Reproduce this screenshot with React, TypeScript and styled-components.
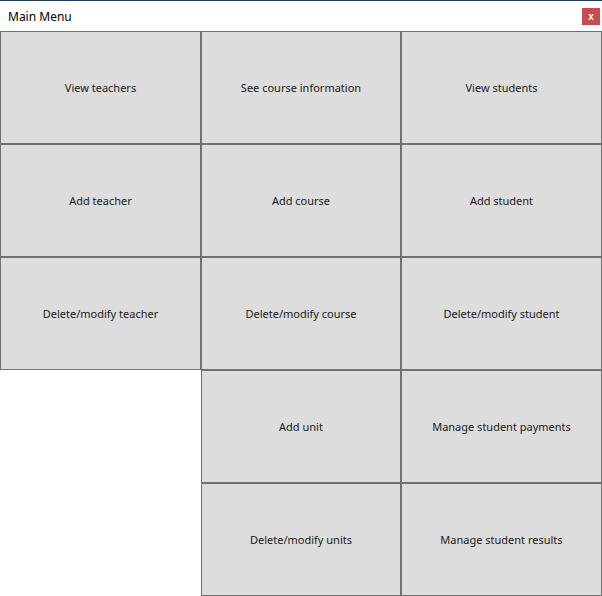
import React from "react";
import styled, { createGlobalStyle } from "styled-components";

const Global = createGlobalStyle`
  html, body { margin: 0; padding: 0; background: #ffffff; }
  body { font-family: "Noto Sans", "Open Sans", "Liberation Sans", sans-serif; }
  * { box-sizing: border-box; }
`;

const Window = styled.div`
  width: 602px;
  height: 596px;
  background: #ffffff;
  display: flex;
  flex-direction: column;
  border-top: 1px solid #1d3c5c;
`;

const TitleBar = styled.div`
  height: 30px;
  display: flex;
  align-items: center;
  justify-content: space-between;
  padding: 0 2px 0 8px;
`;

const Title = styled.span`
  font-size: 12px;
  color: #000000;
  line-height: 1;
  margin-top: 1px;
`;

const CloseButton = styled.button`
  width: 18px;
  height: 17px;
  margin-top: 1px;
  border: none;
  padding: 0;
  background: #c74b50;
  color: #ffffff;
  font-family: "Liberation Sans", sans-serif;
  font-weight: bold;
  font-size: 10px;
  line-height: 17px;
  text-align: center;
`;

const Grid = styled.div`
  display: grid;
  grid-template-columns: 201px 200px 201px;
  grid-auto-rows: 113px;
`;

const MenuButton = styled.button<{ $col?: number }>`
  grid-column: ${(p) => (p.$col ? `${p.$col}` : "auto")};
  background: #dddddd;
  border: 1px solid #707070;
  margin: 0;
  padding: 0;
  font-family: "Noto Sans", "Open Sans", "Liberation Sans", sans-serif;
  font-size: 11px;
  color: #1a1a1a;
  display: flex;
  align-items: center;
  justify-content: center;
`;

type Item = { label: string; col?: number };

const items: Item[] = [
  { label: "View teachers" },
  { label: "See course information" },
  { label: "View students" },
  { label: "Add teacher" },
  { label: "Add course" },
  { label: "Add student" },
  { label: "Delete/modify teacher" },
  { label: "Delete/modify course" },
  { label: "Delete/modify student" },
  { label: "Add unit", col: 2 },
  { label: "Manage student payments" },
  { label: "Delete/modify units", col: 2 },
  { label: "Manage student results" },
];

export default function App() {
  return (
    <>
      <Global />
      <Window>
        <TitleBar>
          <Title>Main Menu</Title>
          <CloseButton>x</CloseButton>
        </TitleBar>
        <Grid>
          {items.map((it) => (
            <MenuButton key={it.label} $col={it.col}>
              {it.label}
            </MenuButton>
          ))}
        </Grid>
      </Window>
    </>
  );
}
